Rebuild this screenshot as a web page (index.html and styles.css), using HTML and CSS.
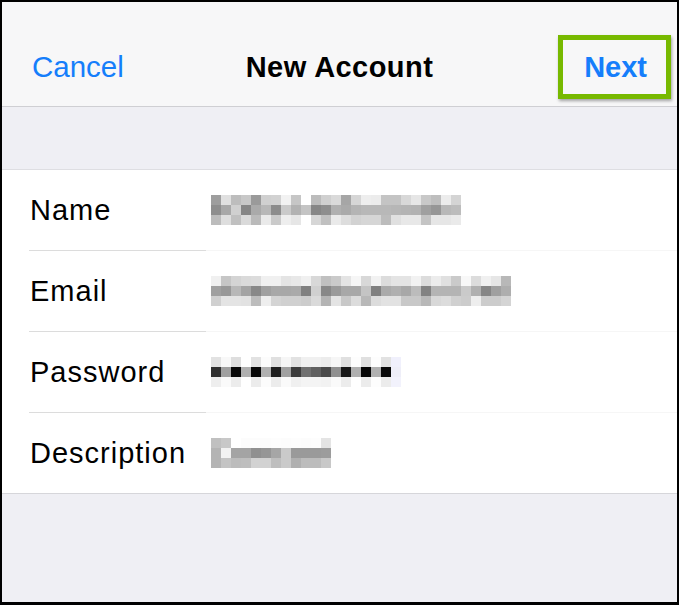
FILE: index.html
```html
<!DOCTYPE html>
<html>
<head>
<meta charset="utf-8">
<link rel="stylesheet" href="styles.css">
</head>
<body>
<div class="frame">
  <header class="nav">
    <span class="nav-btn cancel">Cancel</span>
    <span class="nav-title">New Account</span>
    <span class="nav-btn next">Next</span>
    <span class="highlight"></span>
  </header>
  <div class="gap"></div>
  <section class="list">
    <div class="row">
      <span class="label">Name</span>
      <svg class="blur" width="250" height="30" viewBox="0 0 250 30" shape-rendering="crispEdges">
        <g>
          <rect x="0" y="0" width="10" height="10" fill="#9e9e9e"/><rect x="10" y="0" width="10" height="10" fill="#e0e0e0"/><rect x="20" y="0" width="10" height="10" fill="#bdbdbd"/><rect x="30" y="0" width="10" height="10" fill="#c8c8c8"/><rect x="40" y="0" width="10" height="10" fill="#9a9a9a"/><rect x="50" y="0" width="10" height="10" fill="#d0d0d0"/><rect x="60" y="0" width="10" height="10" fill="#d2d2d2"/><rect x="70" y="0" width="10" height="10" fill="#f2f2f2"/><rect x="80" y="0" width="10" height="10" fill="#c6c6c6"/><rect x="90" y="0" width="10" height="10" fill="#ffffff"/><rect x="100" y="0" width="10" height="10" fill="#bcbcbc"/><rect x="110" y="0" width="10" height="10" fill="#d0d0d0"/><rect x="120" y="0" width="10" height="10" fill="#dadada"/><rect x="130" y="0" width="10" height="10" fill="#a6a6a6"/><rect x="140" y="0" width="10" height="10" fill="#d6d6d6"/><rect x="150" y="0" width="10" height="10" fill="#eeeeee"/><rect x="160" y="0" width="10" height="10" fill="#ececec"/><rect x="170" y="0" width="10" height="10" fill="#c4c4c4"/><rect x="180" y="0" width="10" height="10" fill="#c4c4c4"/><rect x="190" y="0" width="10" height="10" fill="#d8d8d8"/><rect x="200" y="0" width="10" height="10" fill="#e6e6e6"/><rect x="210" y="0" width="10" height="10" fill="#c8c8c8"/><rect x="220" y="0" width="10" height="10" fill="#bebebe"/><rect x="230" y="0" width="10" height="10" fill="#ececec"/><rect x="240" y="0" width="10" height="10" fill="#d4d4d4"/>
        </g>
        <g>
          <rect x="0" y="10" width="10" height="10" fill="#8e8e8e"/><rect x="10" y="10" width="10" height="10" fill="#a8a8a8"/><rect x="20" y="10" width="10" height="10" fill="#d0d0d0"/><rect x="30" y="10" width="10" height="10" fill="#868686"/><rect x="40" y="10" width="10" height="10" fill="#aaaaaa"/><rect x="50" y="10" width="10" height="10" fill="#b8b8b8"/><rect x="60" y="10" width="10" height="10" fill="#8c8c8c"/><rect x="70" y="10" width="10" height="10" fill="#cacaca"/><rect x="80" y="10" width="10" height="10" fill="#b2b2b2"/><rect x="90" y="10" width="10" height="10" fill="#c4c4c4"/><rect x="100" y="10" width="10" height="10" fill="#868686"/><rect x="110" y="10" width="10" height="10" fill="#8e8e8e"/><rect x="120" y="10" width="10" height="10" fill="#b0b0b0"/><rect x="130" y="10" width="10" height="10" fill="#aaaaaa"/><rect x="140" y="10" width="10" height="10" fill="#b4b4b4"/><rect x="150" y="10" width="10" height="10" fill="#b8b8b8"/><rect x="160" y="10" width="10" height="10" fill="#b8b8b8"/><rect x="170" y="10" width="10" height="10" fill="#b8b8b8"/><rect x="180" y="10" width="10" height="10" fill="#b6b6b6"/><rect x="190" y="10" width="10" height="10" fill="#b4b4b4"/><rect x="200" y="10" width="10" height="10" fill="#b2b2b2"/><rect x="210" y="10" width="10" height="10" fill="#a0a0a0"/><rect x="220" y="10" width="10" height="10" fill="#969696"/><rect x="230" y="10" width="10" height="10" fill="#b8b8b8"/><rect x="240" y="10" width="10" height="10" fill="#bcbcbc"/>
        </g>
        <g>
          <rect x="0" y="20" width="10" height="10" fill="#bcbcbc"/><rect x="10" y="20" width="10" height="10" fill="#dedede"/><rect x="20" y="20" width="10" height="10" fill="#c0c0c0"/><rect x="30" y="20" width="10" height="10" fill="#dadada"/><rect x="40" y="20" width="10" height="10" fill="#bababa"/><rect x="50" y="20" width="10" height="10" fill="#eaeaea"/><rect x="60" y="20" width="10" height="10" fill="#cacaca"/><rect x="70" y="20" width="10" height="10" fill="#eeeeee"/><rect x="80" y="20" width="10" height="10" fill="#e6e6e6"/><rect x="90" y="20" width="10" height="10" fill="#ffffff"/><rect x="100" y="20" width="10" height="10" fill="#d6d6d6"/><rect x="110" y="20" width="10" height="10" fill="#c0c0c0"/><rect x="120" y="20" width="10" height="10" fill="#eaeaea"/><rect x="130" y="20" width="10" height="10" fill="#dddddd"/><rect x="140" y="20" width="10" height="10" fill="#d2d2d2"/><rect x="150" y="20" width="10" height="10" fill="#d6d6d6"/><rect x="160" y="20" width="10" height="10" fill="#d6d6d6"/><rect x="170" y="20" width="10" height="10" fill="#bcbcbc"/><rect x="180" y="20" width="10" height="10" fill="#e0e0e0"/><rect x="190" y="20" width="10" height="10" fill="#e8e8e8"/><rect x="200" y="20" width="10" height="10" fill="#e8e8e8"/><rect x="210" y="20" width="10" height="10" fill="#c4c4c4"/><rect x="220" y="20" width="10" height="10" fill="#e6e6e6"/><rect x="230" y="20" width="10" height="10" fill="#e6e6e6"/><rect x="240" y="20" width="10" height="10" fill="#eaeaea"/>
        </g>
      </svg>
    </div>
    <div class="sep"></div>
    <div class="row">
      <span class="label">Email</span>
      <svg class="blur" width="300" height="30" viewBox="0 0 300 30" shape-rendering="crispEdges">
        <g>
          <rect x="0" y="0" width="10" height="10" fill="#f0f0f0"/><rect x="10" y="0" width="10" height="10" fill="#c6c6c6"/><rect x="20" y="0" width="10" height="10" fill="#d4d4d4"/><rect x="30" y="0" width="10" height="10" fill="#dadada"/><rect x="40" y="0" width="10" height="10" fill="#dcdcdc"/><rect x="50" y="0" width="10" height="10" fill="#f0f0f0"/><rect x="60" y="0" width="10" height="10" fill="#f0f0f0"/><rect x="70" y="0" width="10" height="10" fill="#e4e4e4"/><rect x="80" y="0" width="10" height="10" fill="#e8e8e8"/><rect x="90" y="0" width="10" height="10" fill="#f0f0f0"/><rect x="100" y="0" width="10" height="10" fill="#d8d8d8"/><rect x="110" y="0" width="10" height="10" fill="#c0c0c0"/><rect x="120" y="0" width="10" height="10" fill="#cacaca"/><rect x="130" y="0" width="10" height="10" fill="#e4e4e4"/><rect x="140" y="0" width="10" height="10" fill="#f6f6f6"/><rect x="150" y="0" width="10" height="10" fill="#d8d8d8"/><rect x="160" y="0" width="10" height="10" fill="#f2f2f2"/><rect x="170" y="0" width="10" height="10" fill="#dcdcdc"/><rect x="180" y="0" width="10" height="10" fill="#e4e4e4"/><rect x="190" y="0" width="10" height="10" fill="#e4e4e4"/><rect x="200" y="0" width="10" height="10" fill="#f2f2f2"/><rect x="210" y="0" width="10" height="10" fill="#dcdcdc"/><rect x="220" y="0" width="10" height="10" fill="#ececec"/><rect x="230" y="0" width="10" height="10" fill="#e0e0e0"/><rect x="240" y="0" width="10" height="10" fill="#cacaca"/><rect x="250" y="0" width="10" height="10" fill="#f8f8f8"/><rect x="260" y="0" width="10" height="10" fill="#dcdcdc"/><rect x="270" y="0" width="10" height="10" fill="#f0f0f0"/><rect x="280" y="0" width="10" height="10" fill="#e6e6e6"/><rect x="290" y="0" width="10" height="10" fill="#b8b8b8"/>
        </g>
        <g>
          <rect x="0" y="10" width="10" height="10" fill="#a0a0a0"/><rect x="10" y="10" width="10" height="10" fill="#989898"/><rect x="20" y="10" width="10" height="10" fill="#b8b8b8"/><rect x="30" y="10" width="10" height="10" fill="#a4a4a4"/><rect x="40" y="10" width="10" height="10" fill="#888888"/><rect x="50" y="10" width="10" height="10" fill="#a0a0a0"/><rect x="60" y="10" width="10" height="10" fill="#a8a8a8"/><rect x="70" y="10" width="10" height="10" fill="#a8a8a8"/><rect x="80" y="10" width="10" height="10" fill="#aaaaaa"/><rect x="90" y="10" width="10" height="10" fill="#808080"/><rect x="100" y="10" width="10" height="10" fill="#d0d0d0"/><rect x="110" y="10" width="10" height="10" fill="#888888"/><rect x="120" y="10" width="10" height="10" fill="#9a9a9a"/><rect x="130" y="10" width="10" height="10" fill="#a8a8a8"/><rect x="140" y="10" width="10" height="10" fill="#a8a8a8"/><rect x="150" y="10" width="10" height="10" fill="#c4c4c4"/><rect x="160" y="10" width="10" height="10" fill="#808080"/><rect x="170" y="10" width="10" height="10" fill="#aaaaaa"/><rect x="180" y="10" width="10" height="10" fill="#b0b0b0"/><rect x="190" y="10" width="10" height="10" fill="#a8a8a8"/><rect x="200" y="10" width="10" height="10" fill="#bcbcbc"/><rect x="210" y="10" width="10" height="10" fill="#828282"/><rect x="220" y="10" width="10" height="10" fill="#b4b4b4"/><rect x="230" y="10" width="10" height="10" fill="#b4b4b4"/><rect x="240" y="10" width="10" height="10" fill="#b4b4b4"/><rect x="250" y="10" width="10" height="10" fill="#cacaca"/><rect x="260" y="10" width="10" height="10" fill="#b0b0b0"/><rect x="270" y="10" width="10" height="10" fill="#868686"/><rect x="280" y="10" width="10" height="10" fill="#a0a0a0"/><rect x="290" y="10" width="10" height="10" fill="#aeaeae"/>
        </g>
        <g>
          <rect x="0" y="20" width="10" height="10" fill="#d0d0d0"/><rect x="10" y="20" width="10" height="10" fill="#e4e4e4"/><rect x="20" y="20" width="10" height="10" fill="#e4e4e4"/><rect x="30" y="20" width="10" height="10" fill="#e2e2e2"/><rect x="40" y="20" width="10" height="10" fill="#bcbcbc"/><rect x="50" y="20" width="10" height="10" fill="#eeeeee"/><rect x="60" y="20" width="10" height="10" fill="#d4d4d4"/><rect x="70" y="20" width="10" height="10" fill="#d0d0d0"/><rect x="80" y="20" width="10" height="10" fill="#d0d0d0"/><rect x="90" y="20" width="10" height="10" fill="#cccccc"/><rect x="100" y="20" width="10" height="10" fill="#dadada"/><rect x="110" y="20" width="10" height="10" fill="#b4b4b4"/><rect x="120" y="20" width="10" height="10" fill="#e4e4e4"/><rect x="130" y="20" width="10" height="10" fill="#c8c8c8"/><rect x="140" y="20" width="10" height="10" fill="#dcdcdc"/><rect x="150" y="20" width="10" height="10" fill="#b8b8b8"/><rect x="160" y="20" width="10" height="10" fill="#dcdcdc"/><rect x="170" y="20" width="10" height="10" fill="#e2e2e2"/><rect x="180" y="20" width="10" height="10" fill="#e2e2e2"/><rect x="190" y="20" width="10" height="10" fill="#c8c8c8"/><rect x="200" y="20" width="10" height="10" fill="#c8c8c8"/><rect x="210" y="20" width="10" height="10" fill="#b8b8b8"/><rect x="220" y="20" width="10" height="10" fill="#d8d8d8"/><rect x="230" y="20" width="10" height="10" fill="#dcdcdc"/><rect x="240" y="20" width="10" height="10" fill="#d0d0d0"/><rect x="250" y="20" width="10" height="10" fill="#cccccc"/><rect x="260" y="20" width="10" height="10" fill="#eeeeee"/><rect x="270" y="20" width="10" height="10" fill="#cccccc"/><rect x="280" y="20" width="10" height="10" fill="#cccccc"/><rect x="290" y="20" width="10" height="10" fill="#d4d4d4"/>
        </g>
      </svg>
    </div>
    <div class="sep"></div>
    <div class="row">
      <span class="label">Password</span>
      <svg class="blur" width="190" height="30" viewBox="0 0 190 30" shape-rendering="crispEdges">
        <g>
          <rect x="0" y="0" width="10" height="10" fill="#e2e2e2"/><rect x="10" y="0" width="10" height="10" fill="#f8f8f8"/><rect x="20" y="0" width="10" height="10" fill="#dedede"/><rect x="30" y="0" width="10" height="10" fill="#ffffff"/><rect x="40" y="0" width="10" height="10" fill="#e2e2e2"/><rect x="50" y="0" width="10" height="10" fill="#fcfcfc"/><rect x="60" y="0" width="10" height="10" fill="#e0e0e0"/><rect x="70" y="0" width="10" height="10" fill="#f6f6f6"/><rect x="80" y="0" width="10" height="10" fill="#e2e2e2"/><rect x="90" y="0" width="10" height="10" fill="#f0f0f0"/><rect x="100" y="0" width="10" height="10" fill="#f0f0f0"/><rect x="110" y="0" width="10" height="10" fill="#ececec"/><rect x="120" y="0" width="10" height="10" fill="#f6f6f6"/><rect x="130" y="0" width="10" height="10" fill="#e0e0e0"/><rect x="140" y="0" width="10" height="10" fill="#fdfdfd"/><rect x="150" y="0" width="10" height="10" fill="#e0e0e0"/><rect x="160" y="0" width="10" height="10" fill="#fdfdfd"/><rect x="170" y="0" width="10" height="10" fill="#e2e2e2"/><rect x="180" y="0" width="10" height="10" fill="#f0f0fc"/>
        </g>
        <g>
          <rect x="0" y="10" width="10" height="10" fill="#303030"/><rect x="10" y="10" width="10" height="10" fill="#a0a0a0"/><rect x="20" y="10" width="10" height="10" fill="#080808"/><rect x="30" y="10" width="10" height="10" fill="#b0b0b0"/><rect x="40" y="10" width="10" height="10" fill="#080808"/><rect x="50" y="10" width="10" height="10" fill="#b0b0b0"/><rect x="60" y="10" width="10" height="10" fill="#1e1e1e"/><rect x="70" y="10" width="10" height="10" fill="#a0a0a0"/><rect x="80" y="10" width="10" height="10" fill="#3c3c3c"/><rect x="90" y="10" width="10" height="10" fill="#707070"/><rect x="100" y="10" width="10" height="10" fill="#606060"/><rect x="110" y="10" width="10" height="10" fill="#4a4a4a"/><rect x="120" y="10" width="10" height="10" fill="#909090"/><rect x="130" y="10" width="10" height="10" fill="#181818"/><rect x="140" y="10" width="10" height="10" fill="#b0b0b0"/><rect x="150" y="10" width="10" height="10" fill="#060606"/><rect x="160" y="10" width="10" height="10" fill="#b0b0b0"/><rect x="170" y="10" width="10" height="10" fill="#0a0a0a"/><rect x="180" y="10" width="10" height="10" fill="#eeeef8"/>
        </g>
        <g>
          <rect x="0" y="20" width="10" height="10" fill="#eeeeee"/><rect x="10" y="20" width="10" height="10" fill="#fafafa"/><rect x="20" y="20" width="10" height="10" fill="#ececec"/><rect x="30" y="20" width="10" height="10" fill="#ffffff"/><rect x="40" y="20" width="10" height="10" fill="#ececec"/><rect x="50" y="20" width="10" height="10" fill="#fcfcfc"/><rect x="60" y="20" width="10" height="10" fill="#ececec"/><rect x="70" y="20" width="10" height="10" fill="#fafafa"/><rect x="80" y="20" width="10" height="10" fill="#f0f0f0"/><rect x="90" y="20" width="10" height="10" fill="#f4f4f4"/><rect x="100" y="20" width="10" height="10" fill="#f4f4f4"/><rect x="110" y="20" width="10" height="10" fill="#f2f2f2"/><rect x="120" y="20" width="10" height="10" fill="#fafafa"/><rect x="130" y="20" width="10" height="10" fill="#ececec"/><rect x="140" y="20" width="10" height="10" fill="#ffffff"/><rect x="150" y="20" width="10" height="10" fill="#ececec"/><rect x="160" y="20" width="10" height="10" fill="#fdfdfd"/><rect x="170" y="20" width="10" height="10" fill="#ececec"/><rect x="180" y="20" width="10" height="10" fill="#f2f2fc"/>
        </g>
      </svg>
    </div>
    <div class="sep"></div>
    <div class="row">
      <span class="label">Description</span>
      <svg class="blur" width="120" height="30" viewBox="0 0 120 30" shape-rendering="crispEdges">
        <g>
          <rect x="0" y="0" width="10" height="10" fill="#c0c0c0"/><rect x="10" y="0" width="10" height="10" fill="#c8c8c8"/><rect x="20" y="0" width="10" height="10" fill="#ffffff"/><rect x="30" y="0" width="10" height="10" fill="#fcfcfc"/><rect x="40" y="0" width="10" height="10" fill="#fcfcfc"/><rect x="50" y="0" width="10" height="10" fill="#fcfcfc"/><rect x="60" y="0" width="10" height="10" fill="#fdfdfd"/><rect x="70" y="0" width="10" height="10" fill="#fcfcfc"/><rect x="80" y="0" width="10" height="10" fill="#fdfdfd"/><rect x="90" y="0" width="10" height="10" fill="#fcfcfc"/><rect x="100" y="0" width="10" height="10" fill="#fdfdfd"/><rect x="110" y="0" width="10" height="10" fill="#e4e4e4"/>
        </g>
        <g>
          <rect x="0" y="10" width="10" height="10" fill="#b4b4b4"/><rect x="10" y="10" width="10" height="10" fill="#f2f2f2"/><rect x="20" y="10" width="10" height="10" fill="#a4a4a4"/><rect x="30" y="10" width="10" height="10" fill="#a4a4a4"/><rect x="40" y="10" width="10" height="10" fill="#909090"/><rect x="50" y="10" width="10" height="10" fill="#969696"/><rect x="60" y="10" width="10" height="10" fill="#a6a6a6"/><rect x="70" y="10" width="10" height="10" fill="#cacaca"/><rect x="80" y="10" width="10" height="10" fill="#9a9a9a"/><rect x="90" y="10" width="10" height="10" fill="#9a9a9a"/><rect x="100" y="10" width="10" height="10" fill="#9a9a9a"/><rect x="110" y="10" width="10" height="10" fill="#9c9c9c"/>
        </g>
        <g>
          <rect x="0" y="20" width="10" height="10" fill="#b4b4b4"/><rect x="10" y="20" width="10" height="10" fill="#c4c4c4"/><rect x="20" y="20" width="10" height="10" fill="#bcbcbc"/><rect x="30" y="20" width="10" height="10" fill="#bebebe"/><rect x="40" y="20" width="10" height="10" fill="#d2d2d2"/><rect x="50" y="20" width="10" height="10" fill="#d2d2d2"/><rect x="60" y="20" width="10" height="10" fill="#bebebe"/><rect x="70" y="20" width="10" height="10" fill="#cacaca"/><rect x="80" y="20" width="10" height="10" fill="#b0b0b0"/><rect x="90" y="20" width="10" height="10" fill="#bcbcbc"/><rect x="100" y="20" width="10" height="10" fill="#bcbcbc"/><rect x="110" y="20" width="10" height="10" fill="#c8c8c8"/>
        </g>
      </svg>
    </div>
  </section>
  <div class="footer"></div>
</div>
</body>
</html>
```

FILE: styles.css
```css
* { box-sizing: border-box; }

html, body {
  margin: 0;
  padding: 0;
  background: #000;
}

.frame {
  width: 679px;
  height: 605px;
  border: 2px solid #000;
  border-bottom-width: 3px;
  display: flex;
  flex-direction: column;
  background: #efeff4;
  font-family: "Liberation Sans", Arial, sans-serif;
  overflow: hidden;
}

.nav {
  position: relative;
  height: 105px;
  flex: none;
  background: #f7f7f8;
  border-bottom: 1px solid #cfcfd3;
  display: grid;
  grid-template-columns: 1fr auto 1fr;
  align-items: center;
  padding: 26px 30px 0 30px;
}

.nav-btn {
  font-size: 29.5px;
  color: #157efb;
}

.cancel { justify-self: start; }

.next {
  justify-self: end;
  font-weight: bold;
  font-size: 29px;
}

.nav-title {
  font-size: 29px;
  font-weight: bold;
  color: #000;
  letter-spacing: 0.45px;
}

.highlight {
  position: absolute;
  left: 556px;
  top: 33px;
  width: 113px;
  height: 64px;
  border: 5px solid #77b900;
  box-shadow: 1px 2px 3px rgba(0, 0, 0, 0.35);
}

.gap {
  height: 62px;
  flex: none;
}

.list {
  flex: none;
  background: #fff;
  border-top: 1px solid #dedee2;
  border-bottom: 1px solid #d6d6da;
}

.row {
  height: 80px;
  display: flex;
  align-items: center;
  padding-left: 28px;
}

.label {
  width: 181px;
  flex: none;
  font-size: 29px;
  letter-spacing: 1px;
  color: #000;
}

.blur {
  display: block;
  flex: none;
}

.sep {
  height: 1px;
  margin-left: 27px;
  background: linear-gradient(to right, #dcdcdc 0, #dcdcdc 177px, #f6f6f6 177px);
}

.footer {
  flex: 1;
}
```
